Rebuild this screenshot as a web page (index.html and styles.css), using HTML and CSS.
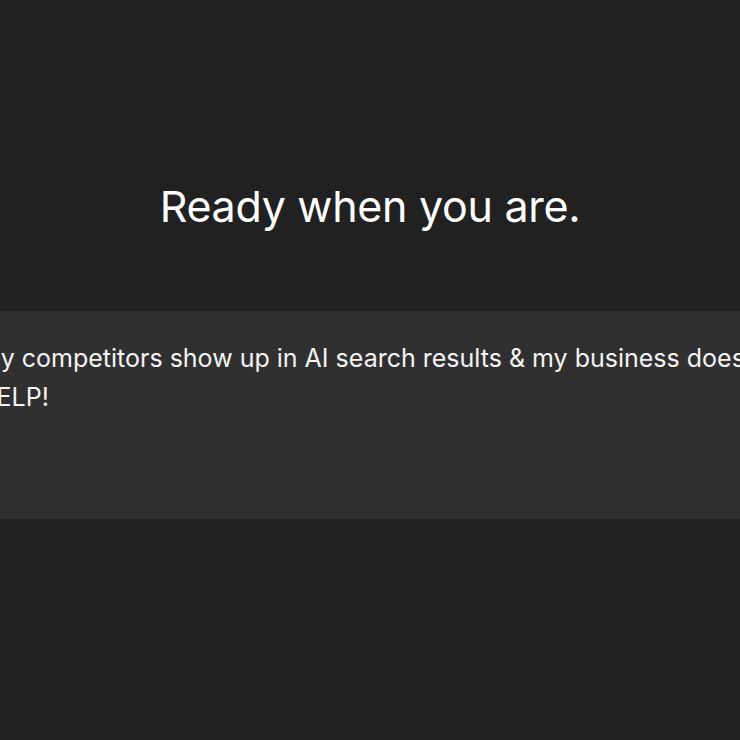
FILE: index.html
```html
<!DOCTYPE html>
<html lang="en">
<head>
<meta charset="utf-8">
<title>Ready when you are.</title>
<link rel="stylesheet" href="styles.css">
</head>
<body>
<main class="page">
  <h1 class="title">Ready when you are.</h1>
  <div class="composer">
    <p class="prompt">My competitors show up in AI search results &amp; my business doesn't.<br>HELP!</p>
  </div>
</main>
</body>
</html>
```

FILE: styles.css
```css
html, body {
  margin: 0;
  padding: 0;
  background: #212121;
  height: 100%;
  overflow: hidden;
}
.page {
  display: flex;
  flex-direction: column;
  align-items: center;
  padding-top: 176px;
  font-family: Inter, "Liberation Sans", sans-serif;
  color: #ffffff;
}
.title {
  margin: 0;
  font-size: 43px;
  line-height: 60px;
  font-weight: 400;
  letter-spacing: -0.3px;
  text-align: center;
}
.composer {
  align-self: flex-start;
  margin-top: 75px;
  margin-left: -60px;
  width: 900px;
  height: 208px;
  background: #303030;
  box-sizing: border-box;
  padding: 28px 0 0 38px;
}
.prompt {
  margin: 0;
  font-size: 25px;
  line-height: 39px;
  white-space: nowrap;
  color: #f4f4f4;
}
```
